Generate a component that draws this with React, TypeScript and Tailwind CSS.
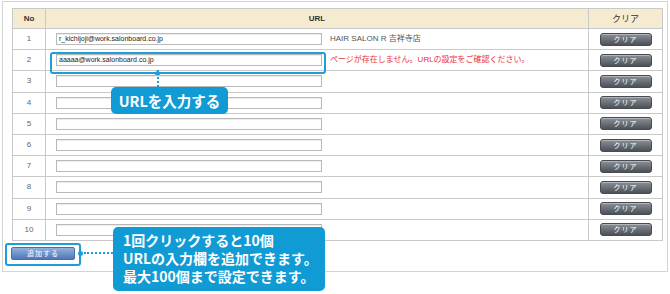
import React from "react";

const rows = [
  { no: 1, url: "r_kichijoji@work.salonboard.co.jp", note: "HAIR SALON R 吉祥寺店", error: false },
  { no: 2, url: "aaaaa@work.salonboard.co.jp", note: "ページが存在しません。URLの設定をご確認ください。", error: true },
  { no: 3, url: "", note: "", error: false },
  { no: 4, url: "", note: "", error: false },
  { no: 5, url: "", note: "", error: false },
  { no: 6, url: "", note: "", error: false },
  { no: 7, url: "", note: "", error: false },
  { no: 8, url: "", note: "", error: false },
  { no: 9, url: "", note: "", error: false },
  { no: 10, url: "", note: "", error: false },
];

const font = "font-['Liberation_Sans','Noto_Sans_CJK_JP',sans-serif]";
const jp = "font-['Noto_Sans_CJK_JP',sans-serif]";

function ClearButton() {
  return (
    <button className="w-[52px] h-[13px] rounded-[3px] border border-[#474b52] bg-gradient-to-b from-[#8c9198] to-[#4d5158] text-white text-[7px] leading-[11px] tracking-[1px] shadow-[inset_0_1px_0_rgba(255,255,255,0.35)]">
      クリア
    </button>
  );
}

export default function App() {
  return (
    <div className={`relative w-[670px] h-[294px] bg-white overflow-hidden ${font}`}>
      <div className="ml-[2px] mt-[1px] w-[666px] h-[271px] border border-[#d4d4d4] pl-[9px] pt-[6px] flex flex-col items-start">
        <table className="table-fixed border-collapse w-[650px] text-[#555]">
          <colgroup>
            <col className="w-[33px]" />
            <col className="w-[543px]" />
            <col className="w-[74px]" />
          </colgroup>
          <thead>
            <tr className="h-[20px] bg-[#f5ebd0] text-[8px] text-[#333]">
              <th className="border border-[#c9c9c9] font-bold">No</th>
              <th className="border border-[#c9c9c9] font-bold">URL</th>
              <th className={`border border-[#c9c9c9] font-normal text-[9px] ${jp}`}>クリア</th>
            </tr>
          </thead>
          <tbody>
            {rows.map((r) => (
              <tr key={r.no} className="h-[21.2px]">
                <td className="border border-[#c9c9c9] text-center text-[8px] text-[#666]">{r.no}</td>
                <td className="border border-[#c9c9c9] p-0">
                  <div className="relative flex items-center pl-[10px]">
                    <div className="w-[266px] h-[12px] border border-[#b9b9b9] bg-white shadow-[inset_0_1px_1px_rgba(0,0,0,0.08)] flex items-center pl-[2px] text-[7px] text-[#222] whitespace-nowrap">
                      {r.url}
                    </div>
                    {r.note && (
                      <span
                        className={`ml-[8px] text-[8px] whitespace-nowrap ${
                          r.error ? "text-[#e8333a]" : "text-[#555]"
                        }`}
                      >
                        {r.note}
                      </span>
                    )}
                    {r.no === 2 && (
                      <div className="absolute left-[4px] top-[-2px] w-[276px] h-[22px] rounded-[3px] border-2 border-[#1e9dd8]">
                        <div className="absolute left-[103px] bottom-[-4px] w-[5px] h-[5px] rounded-full bg-[#1e9dd8]" />
                      </div>
                    )}
                  </div>
                </td>
                <td className="border border-[#c9c9c9] text-center p-0 align-middle">
                  <div className="flex justify-center">
                    <ClearButton />
                  </div>
                </td>
              </tr>
            ))}
          </tbody>
        </table>

        <div className="relative flex mt-[6px] ml-[-1px]">
          <button className="w-[64px] h-[13px] rounded-[2px] border border-[#4a6ea8] bg-gradient-to-b from-[#93b1dc] to-[#4f77b8] text-white text-[7px] leading-[11px] tracking-[1px]">
            追加する
          </button>
          <div className="absolute left-[-6px] top-[-4px] w-[76px] h-[23px] rounded-[3px] border-2 border-[#1e9dd8]">
            <div className="absolute right-[-4px] top-[6px] w-[5px] h-[5px] rounded-full bg-[#1e9dd8]" />
          </div>
        </div>
      </div>

      {/* URL callout */}
      <div className="absolute left-[157px] top-[70px] h-[17px] border-l-2 border-dotted border-[#1e9dd8]" />
      <div
        className={`absolute left-[111px] top-[87px] w-[117px] h-[27px] rounded-[5px] bg-[#119bd5] text-white text-[14.5px] font-bold flex items-center justify-center ${jp}`}
      >
        URLを入力する
      </div>

      {/* add callout */}
      <div className="absolute left-[84px] top-[252px] w-[29px] border-t-2 border-dotted border-[#1e9dd8]" />
      <div
        className={`absolute left-[113px] top-[227px] w-[212px] h-[64px] rounded-[5px] bg-[#119bd5] text-white text-[14px] font-bold leading-[18px] pl-[10px] pt-[4px] flex flex-col ${jp}`}
      >
        <span>1回クリックすると10個</span>
        <span>URLの入力欄を追加できます。</span>
        <span>最大100個まで設定できます。</span>
      </div>
    </div>
  );
}
